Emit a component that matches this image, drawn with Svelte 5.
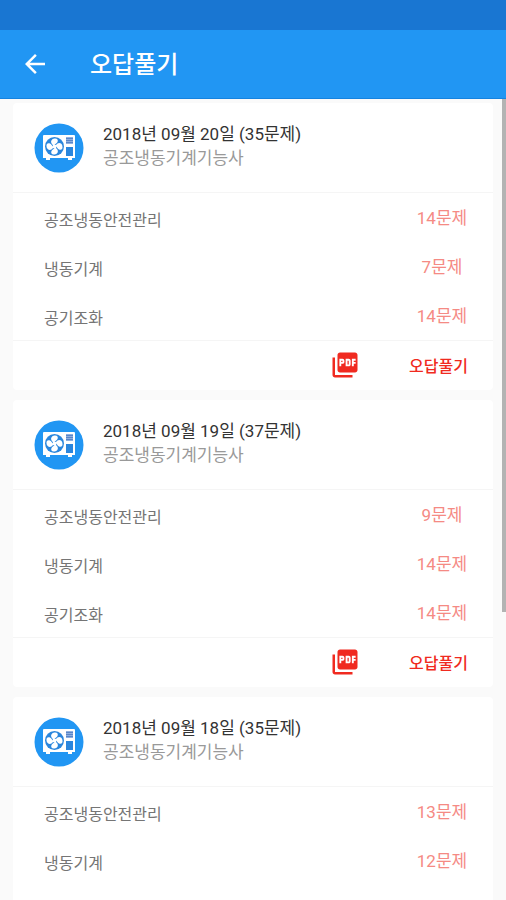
<script lang="ts">
	interface Subject {
		name: string;
		count: number;
	}

	interface WrongNote {
		date: string;
		exam: string;
		subjects: Subject[];
	}

	const notes: WrongNote[] = [
		{
			date: '2018년 09월 20일',
			exam: '공조냉동기계기능사',
			subjects: [
				{ name: '공조냉동안전관리', count: 14 },
				{ name: '냉동기계', count: 7 },
				{ name: '공기조화', count: 14 }
			]
		},
		{
			date: '2018년 09월 19일',
			exam: '공조냉동기계기능사',
			subjects: [
				{ name: '공조냉동안전관리', count: 9 },
				{ name: '냉동기계', count: 14 },
				{ name: '공기조화', count: 14 }
			]
		},
		{
			date: '2018년 09월 18일',
			exam: '공조냉동기계기능사',
			subjects: [
				{ name: '공조냉동안전관리', count: 13 },
				{ name: '냉동기계', count: 12 },
				{ name: '공기조화', count: 10 }
			]
		}
	];

	function total(note: WrongNote): number {
		return note.subjects.reduce((sum, s) => sum + s.count, 0);
	}
</script>

<div class="screen">
	<div class="status-bar"></div>
	<header class="app-bar">
		<button class="back-btn" aria-label="뒤로">
			<svg viewBox="0 0 24 24" width="30" height="30">
				<path fill="#fff" d="M20 11H7.83l5.59-5.59L12 4l-8 8 8 8 1.41-1.41L7.83 13H20v-2z" />
			</svg>
		</button>
		<h1>오답풀기</h1>
	</header>

	<main class="content">
		<div class="list">
			{#each notes as note}
				<article class="card">
					<div class="card-header">
						<svg class="exam-icon" viewBox="0 0 50 50" aria-hidden="true">
							<circle cx="25" cy="25" r="24.5" fill="#2196f3" />
							<path fill="#fff" d="M10 12h30a1 1 0 0 1 1 1v22h-3v2h-4v-2H16v2h-4v-2H9V13a1 1 0 0 1 1-1z" />
							<circle cx="20.5" cy="23.5" r="9.5" fill="#2a86dd" />
							<!-- fan blades -->
							<g fill="#fff">
								<path d="M20 22.5c-3.5-1.5-4-5.5-.5-6.8 3.5-1 5 1 4 3.3-.8 1.7-2.5 2-3.5 3.5z" />
								<path d="M21.5 23c1.5-3.5 5.5-4 6.8-.5 1 3.5-1 5-3.3 4-1.7-.8-2-2.5-3.5-3.5z" />
								<path d="M21 24.5c3.5 1.5 4 5.5.5 6.8-3.5 1-5-1-4-3.3.8-1.7 2.5-2 3.5-3.5z" />
								<path d="M19.5 24c-1.5 3.5-5.5 4-6.8.5-1-3.5 1-5 3.3-4 1.7.8 2 2.5 3.5 3.5z" />
								<circle cx="20.5" cy="23.5" r="2" />
							</g>
							<rect x="32" y="24" width="7" height="9" fill="#2a86dd" />
							<rect x="32" y="14" width="7" height="7" fill="#8fb0e0" />
							<path stroke="#5a85c8" d="M32 15.5h7M32 17.5h7M32 19.5h7" />
						</svg>
						<div class="heading">
							<h2>{note.date} ({total(note)}문제)</h2>
							<p>{note.exam}</p>
						</div>
					</div>

					<ul class="subjects">
						{#each note.subjects as subject}
							<li>
								<span class="name">{subject.name}</span>
								<span class="count">{subject.count}문제</span>
							</li>
						{/each}
					</ul>

					<div class="card-footer">
						<button class="pdf-btn" aria-label="PDF">
							<svg viewBox="0 0 24 24" width="30" height="30">
								<path
									fill="#f02a20"
									d="M20 2H8c-1.1 0-2 .9-2 2v12c0 1.1.9 2 2 2h12c1.1 0 2-.9 2-2V4c0-1.1-.9-2-2-2zm-8.5 7.5c0 .83-.67 1.5-1.5 1.5H9v2H7.5V7H10c.83 0 1.5.67 1.5 1.5v1zm5 2c0 .83-.67 1.5-1.5 1.5h-2.5V7H15c.83 0 1.5.67 1.5 1.5v3zm4-3H19v1h1.5V11H19v2h-1.5V7h3v1.5zM9 9.5h1v-1H9v1zM4 6H2v14c0 1.1.9 2 2 2h14v-2H4V6zm10 5.5h1v-3h-1v3z"
								/>
							</svg>
						</button>
						<button class="solve-btn">오답풀기</button>
					</div>
				</article>
			{/each}
		</div>
		<div class="scroll-thumb"></div>
	</main>
</div>

<style>
	:global(body) {
		margin: 0;
	}

	.screen {
		height: 100vh;
		display: flex;
		flex-direction: column;
		background: #fafafa;
		font-family: Roboto, 'Noto Sans CJK KR', sans-serif;
	}

	button {
		padding: 0;
		border: none;
		background: none;
		font-family: inherit;
		cursor: pointer;
	}

	svg {
		display: block;
	}

	.status-bar {
		flex: none;
		height: 30px;
		background: #1976d2;
	}

	.app-bar {
		flex: none;
		display: flex;
		align-items: center;
		gap: 40px;
		height: 68px;
		padding: 0 20px;
		background: #2196f3;
		border-bottom: 1px solid #1583e0;
	}

	.app-bar h1 {
		margin: 0;
		padding-top: 2px;
		font-size: 24px;
		font-weight: 500;
		line-height: 32px;
		color: #fff;
	}

	.content {
		flex: 1;
		min-height: 0;
		position: relative;
	}

	.list {
		height: 100%;
		box-sizing: border-box;
		display: flex;
		flex-direction: column;
		gap: 10px;
		padding: 4px 13px;
		overflow-y: auto;
		scrollbar-width: none;
	}

	.scroll-thumb {
		position: absolute;
		top: 0;
		right: 0;
		width: 4px;
		height: 64%;
		background: #b3b3b3;
	}

	.card {
		flex: none;
		background: #fff;
		border-radius: 4px;
	}

	.card-header {
		display: flex;
		align-items: center;
		gap: 19px;
		height: 89px;
		padding: 0 21px;
		border-bottom: 1px solid #f5f5f5;
	}

	.exam-icon {
		flex: none;
		width: 50px;
		height: 50px;
	}

	.heading {
		padding-bottom: 4px;
	}

	.heading h2,
	.heading p {
		margin: 0;
		font-size: 17px;
		font-weight: 400;
		line-height: 24px;
	}

	.heading h2 {
		color: #333;
	}

	.heading p {
		color: #999;
	}

	.subjects {
		margin: 0;
		padding: 0 0 0 31px;
		list-style: none;
	}

	.subjects li {
		display: flex;
		align-items: center;
		justify-content: space-between;
		height: 49px;
		line-height: 18px;
	}

	.name {
		padding-top: 6px;
		font-size: 16px;
		color: #757575;
	}

	.count {
		padding-top: 1px;
		width: 102px;
		font-size: 17px;
		text-align: center;
		color: #f58a84;
	}

	.card-footer {
		display: flex;
		align-items: center;
		justify-content: flex-end;
		gap: 49px;
		height: 49px;
		padding-right: 25px;
		border-top: 1px solid #f5f5f5;
	}

	.pdf-btn,
	.solve-btn {
		padding-bottom: 2px;
	}

	.solve-btn {
		font-size: 16px;
		font-weight: 500;
		color: #f02a20;
	}
</style>
